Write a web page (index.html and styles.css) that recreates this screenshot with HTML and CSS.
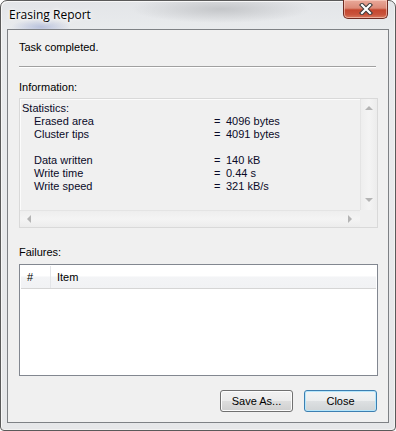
FILE: index.html
```html
<!DOCTYPE html>
<html lang="en">
<head>
    <meta charset="UTF-8">
    <title>Erasing Report</title>
    <link rel="stylesheet" href="styles.css">
</head>
<body>
    <div class="window">
        <div class="titlebar">
            <span class="title">Erasing Report</span>
            <button class="close-x" title="Close">
                <svg width="14" height="12" viewBox="0 0 14 12">
                    <path d="M3 2 L11 10 M11 2 L3 10" stroke="#3a3a3a" stroke-width="4.2" stroke-linecap="square"/>
                    <path d="M3 2 L11 10 M11 2 L3 10" stroke="#fff" stroke-width="2.2" stroke-linecap="square"/>
                </svg>
            </button>
        </div>
        <div class="client">
            <p class="status">Task completed.</p>
            <div class="sep"></div>

            <div class="caption">Information:</div>
            <div class="infobox">
                <div class="info-main">
                    <div class="stats">
                        <div class="head">Statistics:</div>
                        <div class="key">Erased area</div><div>=</div><div>4096 bytes</div>
                        <div class="key">Cluster tips</div><div>=</div><div>4091 bytes</div>
                        <div class="blank"></div>
                        <div class="key">Data written</div><div>=</div><div>140 kB</div>
                        <div class="key">Write time</div><div>=</div><div>0.44 s</div>
                        <div class="key">Write speed</div><div>=</div><div>321 kB/s</div>
                    </div>
                    <div class="vscroll">
                        <span class="arrow up"></span>
                        <span class="arrow down"></span>
                    </div>
                </div>
                <div class="hscroll-row">
                    <div class="hscroll">
                        <span class="arrow left"></span>
                        <span class="arrow right"></span>
                    </div>
                    <div class="corner"></div>
                </div>
            </div>

            <div class="caption failures">Failures:</div>
            <div class="listview">
                <div class="lv-header">
                    <span class="col-num">#</span>
                    <span class="col-item">Item</span>
                </div>
            </div>

            <div class="buttons">
                <button class="btn">Save As...</button>
                <button class="btn default">Close</button>
            </div>
        </div>
    </div>
</body>
</html>
```

FILE: styles.css
```css
body {
    margin: 0;
    font-family: "Liberation Sans", Arial, sans-serif;
    font-size: 11px;
    color: #000;
    background: #fff;
}
.window {
    width: 396px;
    height: 431px;
    box-sizing: border-box;
    border: 1px solid #5a5a5a;
    border-radius: 7px 7px 4px 4px;
    padding: 0 6px 7px 6px;
    display: flex;
    flex-direction: column;
    background:
        radial-gradient(ellipse 90px 14px at 220px 8px, #c4c6c9 0%, rgba(200,202,205,0) 100%),
        radial-gradient(ellipse 30px 8px at 40px 26px, #b9c2dd 0%, rgba(190,200,225,0) 100%),
        linear-gradient(to bottom, #e3e5e8 0px, #e9ebed 30px, #e6e7e9 100%);
    box-shadow: inset 1px 1px 0 #f7f7f7, inset -1px -1px 0 #f2f2f2;
}
.titlebar {
    height: 28px;
    display: flex;
    justify-content: space-between;
    align-items: flex-start;
}
.title {
    font-family: "Open Sans", "Noto Sans", sans-serif;
    font-size: 12px;
    color: #000;
    margin: 5px 0 0 2px;
    text-shadow: 0 0 6px #fff, 0 0 3px #fff;
}
.close-x {
    width: 45px;
    height: 19px;
    margin: -1px 1px 0 0;
    padding: 0;
    border: 1px solid #6e2b22;
    border-top: none;
    border-radius: 0 0 5px 5px;
    background: linear-gradient(to bottom, #e9a99a 0%, #dc8a78 45%, #c4472f 55%, #c9533b 80%, #d87a5e 100%);
    box-shadow: inset 0 0 0 1px rgba(255,220,210,0.55);
    display: flex;
    align-items: center;
    justify-content: center;
}
.close-x svg {
    display: block;
}
.client {
    flex: 1;
    border: 1px solid #7e8185;
    background: #f0f0f0;
    padding: 10px 10px 0 11px;
    display: flex;
    flex-direction: column;
}
.status {
    margin: 1px 0 0 0;
    line-height: 13px;
}
.sep {
    height: 1px;
    background: #a0a0a0;
    border-bottom: 1px solid #fff;
    margin: 12px 2px 0 0;
}
.caption {
    line-height: 13px;
    margin-top: 13px;
}
.caption.failures {
    margin-top: 18px;
}
.infobox {
    margin-top: 4px;
    height: 130px;
    box-sizing: border-box;
    border: 1px solid #d9d9d9;
    box-shadow: inset 1px 1px 0 #fcfcfc;
    display: flex;
    flex-direction: column;
}
.info-main {
    flex: 1;
    display: flex;
}
.stats {
    flex: 1;
    padding: 3px 0 0 2px;
    display: grid;
    grid-template-columns: 192px 12px auto;
    grid-auto-rows: 13px;
    line-height: 13px;
    color: #0a0a28;
}
.stats .head, .stats .blank {
    grid-column: 1 / 4;
}
.stats .key {
    padding-left: 12px;
}
.vscroll {
    width: 17px;
    box-sizing: border-box;
    border-left: 1px solid #e4e4e4;
    background: linear-gradient(to right, #eeeeee, #f4f4f4 50%, #ececec);
    display: flex;
    flex-direction: column;
    justify-content: space-between;
    align-items: center;
    padding: 7px 0 8px 0;
}
.hscroll-row {
    height: 17px;
    display: flex;
}
.hscroll {
    flex: 1;
    border-top: 1px solid #e4e4e4;
    background: linear-gradient(to bottom, #eeeeee, #f4f4f4 50%, #ececec);
    display: flex;
    justify-content: space-between;
    align-items: center;
    padding: 0 8px 0 7px;
}
.corner {
    width: 17px;
    background: #efefef;
}
.arrow {
    width: 0;
    height: 0;
    border: 3px solid transparent;
}
.arrow.up {
    border-bottom: 4px solid #b4b4b4;
    border-top: none;
    border-left-width: 4px;
    border-right-width: 4px;
}
.arrow.down {
    border-top: 4px solid #b4b4b4;
    border-bottom: none;
    border-left-width: 4px;
    border-right-width: 4px;
}
.arrow.left {
    border-right: 4px solid #b4b4b4;
    border-left: none;
    border-top-width: 4px;
    border-bottom-width: 4px;
}
.arrow.right {
    border-left: 4px solid #b4b4b4;
    border-right: none;
    border-top-width: 4px;
    border-bottom-width: 4px;
}
.listview {
    margin-top: 5px;
    height: 112px;
    box-sizing: border-box;
    border: 1px solid #828790;
    background: #fff;
    padding: 1px 1px 0 1px;
}
.lv-header {
    height: 23px;
    box-sizing: border-box;
    border-bottom: 1px solid #d5d5d5;
    background: linear-gradient(to bottom, #ffffff 0%, #ffffff 45%, #f3f4f6 50%, #f1f2f4 100%);
    display: flex;
    align-items: center;
}
.col-num {
    width: 30px;
    box-sizing: border-box;
    padding-left: 6px;
    align-self: stretch;
    display: flex;
    align-items: center;
    border-right: 1px solid #e3e5e8;
}
.col-item {
    padding-left: 6px;
}
.buttons {
    display: flex;
    justify-content: flex-end;
    gap: 11px;
    margin-top: 14px;
    padding-right: 1px;
}
.btn {
    width: 73px;
    height: 22px;
    font-family: "Liberation Sans", Arial, sans-serif;
    font-size: 11px;
    color: #000;
    border: 1px solid #707070;
    border-radius: 3px;
    background: linear-gradient(to bottom, #f2f2f2 0%, #ebebeb 49%, #dddddd 51%, #cfcfcf 100%);
    box-shadow: inset 0 0 0 1px #fcfcfc;
    padding: 0;
}
.btn.default {
    border-color: #3c7fb1;
    box-shadow: inset 0 0 0 1px #b6e6fb;
    background: linear-gradient(to bottom, #f2f4f5 0%, #ebedee 49%, #dde0e2 51%, #d0d4d6 100%);
}
```
